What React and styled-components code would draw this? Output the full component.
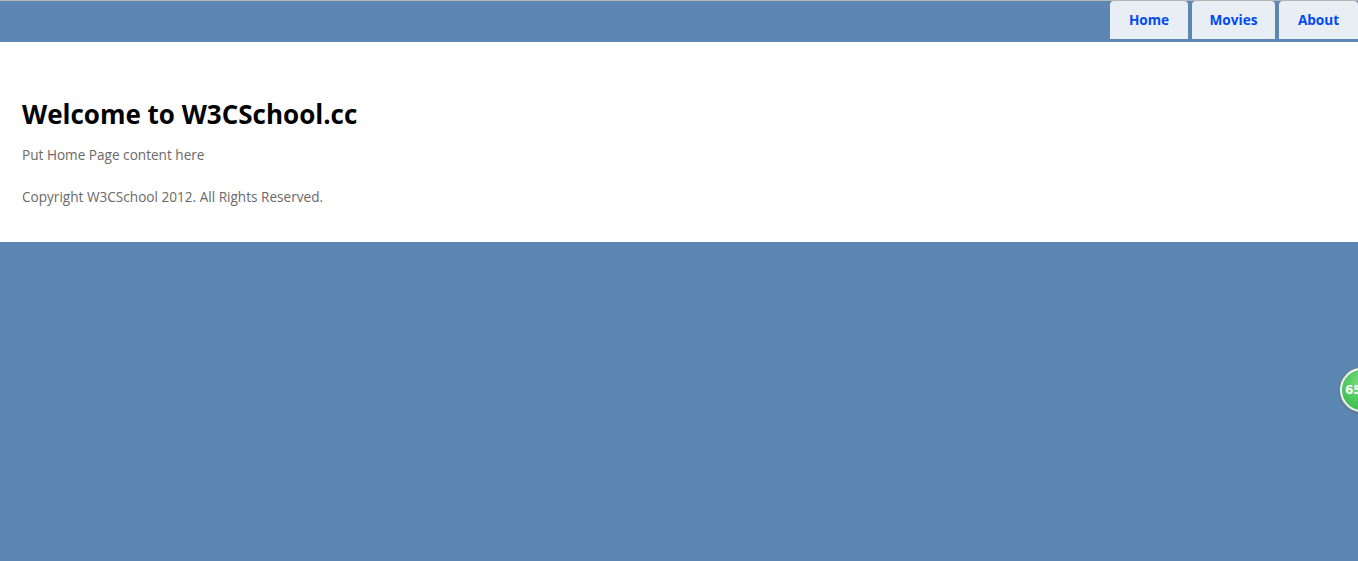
import React from "react";
import styled, { createGlobalStyle } from "styled-components";

const Global = createGlobalStyle`
  html, body { margin: 0; padding: 0; }
  body {
    background-color: #5c87b2;
    font-family: "Trebuchet MS", "Open Sans", "DejaVu Sans", sans-serif;
    font-size: 13.6px;
    color: #696969;
  }
`;

const Page = styled.div`
  border-top: 1px solid #b5b5b5;
  min-height: 560px;
  position: relative;
`;

const Header = styled.header`
  height: 41px;
  display: flex;
  justify-content: flex-end;
  align-items: flex-start;
`;

const Menu = styled.nav`
  display: flex;
  gap: 4px;
`;

const Tab = styled.a`
  display: flex;
  align-items: center;
  justify-content: center;
  width: ${(p) => p.$w}px;
  height: 38px;
  padding-bottom: 2px;
  box-sizing: border-box;
  background-color: #e8eef4;
  color: #034af3;
  font-weight: bold;
  font-size: 13.6px;
  text-decoration: none;
  border-radius: 4px 4px 0 0;
`;

const Main = styled.main`
  background: #fff;
  height: 200px;
  box-sizing: border-box;
  padding: 56px 22px 0;
`;

const Title = styled.h2`
  margin: 0;
  font-size: 26px;
  line-height: 32px;
  color: #000;
  font-weight: bold;
`;

const Text = styled.p`
  margin: ${(p) => p.$mt}px 0 0;
  font-size: 13.6px;
  line-height: 18px;
`;

const Badge = styled.div`
  position: absolute;
  left: 1340px;
  top: 367px;
  width: 44px;
  height: 44px;
  border-radius: 50%;
  background: radial-gradient(circle at 50% 35%, #7fe08a 0%, #4cc85c 55%, #3db14d 100%);
  border: 2px solid #f4f4f4;
  box-shadow: 0 0 0 1px #7a8a80, 0 1px 3px rgba(0,0,0,0.3);
  color: #fff;
  font-weight: bold;
  font-size: 12px;
  font-family: "DejaVu Sans", sans-serif;
  display: flex;
  align-items: center;
  padding-left: 3px;
  box-sizing: border-box;
`;

export default function App() {
  return (
    <>
      <Global />
      <Page>
        <Header>
          <Menu>
            <Tab $w={78} href="#">Home</Tab>
            <Tab $w={83} href="#">Movies</Tab>
            <Tab $w={79} href="#">About</Tab>
          </Menu>
        </Header>
        <Main>
          <Title>Welcome to W3CSchool.cc</Title>
          <Text $mt={16}>Put Home Page content here</Text>
          <Text $mt={24}>Copyright W3CSchool 2012. All Rights Reserved.</Text>
        </Main>
        <Badge>65</Badge>
      </Page>
    </>
  );
}
